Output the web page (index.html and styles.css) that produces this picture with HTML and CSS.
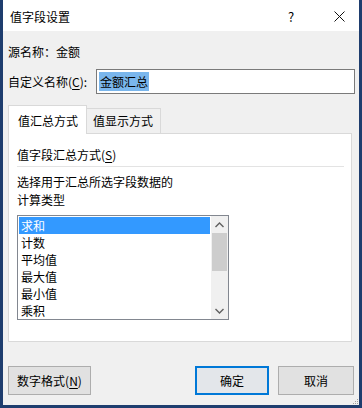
FILE: index.html
```html
<!DOCTYPE html>
<html lang="zh-CN">
<head>
  <meta charset="UTF-8">
  <title>值字段设置</title>
  <link rel="stylesheet" href="styles.css">
</head>
<body>
  <div class="dialog">
    <div class="titlebar">
      <span class="title">值字段设置</span>
      <span class="help">?</span>
      <span class="close">
        <svg width="11" height="11" viewBox="0 0 11 11">
          <path d="M0.5 0.5 L10.5 10.5 M10.5 0.5 L0.5 10.5" stroke="#111" stroke-width="1" fill="none"/>
        </svg>
      </span>
    </div>

    <div class="body">
      <div class="source-row">
        <span>源名称：</span><span>金额</span>
      </div>

      <div class="name-row">
        <span class="name-label">自定义名称(<u>C</u>):</span>
        <div class="text-input"><span class="selected-text">金额汇总</span></div>
      </div>

      <div class="tabs">
        <div class="tab active">值汇总方式</div>
        <div class="tab">值显示方式</div>
      </div>

      <div class="panel">
        <div class="group-title">值字段汇总方式(<u>S</u>)</div>
        <div class="separator"></div>
        <div class="hint">选择用于汇总所选字段数据的</div>
        <div class="hint">计算类型</div>

        <div class="listbox">
          <div class="list-items">
            <div class="item selected">求和</div>
            <div class="item">计数</div>
            <div class="item">平均值</div>
            <div class="item">最大值</div>
            <div class="item">最小值</div>
            <div class="item">乘积</div>
          </div>
          <div class="scrollbar">
            <div class="arrow">
              <svg width="9" height="6" viewBox="0 0 9 6"><path d="M0.5 5 L4.5 1 L8.5 5" stroke="#606060" stroke-width="1.4" fill="none"/></svg>
            </div>
            <div class="thumb"></div>
            <div class="track"></div>
            <div class="arrow">
              <svg width="9" height="6" viewBox="0 0 9 6"><path d="M0.5 1 L4.5 5 L8.5 1" stroke="#606060" stroke-width="1.4" fill="none"/></svg>
            </div>
          </div>
        </div>
      </div>

      <div class="buttons">
        <button class="btn">数字格式(<u>N</u>)</button>
        <span class="spacer"></span>
        <button class="btn default">确定</button>
        <button class="btn">取消</button>
      </div>

      <svg class="grip" width="7" height="7" viewBox="0 0 7 7">
        <rect x="5" y="1" width="1" height="1" fill="#a0a0a0"/>
        <rect x="3" y="3" width="1" height="1" fill="#a0a0a0"/>
        <rect x="5" y="3" width="1" height="1" fill="#a0a0a0"/>
        <rect x="1" y="5" width="1" height="1" fill="#a0a0a0"/>
        <rect x="3" y="5" width="1" height="1" fill="#a0a0a0"/>
        <rect x="5" y="5" width="1" height="1" fill="#a0a0a0"/>
      </svg>
    </div>
  </div>
</body>
</html>
```

FILE: styles.css
```css
/* Dialog frame */
* {
  box-sizing: border-box;
}

body {
  margin: 0;
  font-family: "Noto Sans CJK SC", "Noto Sans", sans-serif;
  font-size: 12px;
  color: #000;
  background: #f0f0f0;
}

u {
  text-decoration: underline;
  text-underline-offset: 2px;
}

.dialog {
  width: 362px;
  height: 408px;
  border: 3px solid #1e3d6e;
  border-top: none;
  background: #f0f0f0;
  display: flex;
  flex-direction: column;
}

.titlebar {
  height: 31px;
  background: #ffffff;
  display: flex;
  align-items: center;
  padding-left: 7px;
  padding-top: 1px;
}

.title {
  flex: 1;
  font-size: 12px;
}

.help {
  font-size: 13px;
  width: 14px;
  margin-right: 36px;
  text-align: center;
}

.close {
  display: flex;
  margin-right: 14px;
}

/* Main area */
.body {
  flex: 1;
  position: relative;
  padding: 13px 4px 0 5px;
  display: flex;
  flex-direction: column;
}

.source-row {
  height: 16px;
  line-height: 16px;
}

.name-row {
  display: flex;
  align-items: center;
  margin-top: 9px;
  height: 25px;
}

.name-label {
  width: 88px;
}

.text-input {
  flex: 1;
  height: 25px;
  background: #ffffff;
  border: 1px solid #7a7a7a;
  padding: 2px 2px;
}

.selected-text {
  display: inline-block;
  background: #7ab6ec;
  height: 19px;
  line-height: 19px;
  padding: 0 1px;
}

/* Tabs */
.tabs {
  display: flex;
  align-items: flex-end;
  margin-top: 11px;
  height: 28px;
  position: relative;
  z-index: 1;
}

.tab {
  height: 25px;
  line-height: 24px;
  padding: 0 6px;
  border: 1px solid #d9d9d9;
  border-bottom: none;
  background: #f0f0f0;
  white-space: nowrap;
}

.tab.active {
  height: 29px;
  line-height: 30px;
  width: 79px;
  background: #ffffff;
  margin-bottom: -1px;
  padding-left: 9px;
}

.tab + .tab {
  border-left: none;
  width: 74px;
}

.panel {
  width: 344px;
  height: 209px;
  background: #ffffff;
  border: 1px solid #d9d9d9;
  padding: 12px 8px 0 8px;
}

.group-title {
  line-height: 18px;
}

.separator {
  width: 327px;
  height: 1px;
  background: #e3e3e3;
  margin: 2px 0 6px;
}

.hint {
  line-height: 18px;
}

/* List box */
.listbox {
  margin-top: 6px;
  width: 212px;
  height: 105px;
  border: 1px solid #828790;
  display: flex;
}

.list-items {
  flex: 1;
  padding: 1px 1px 0 1px;
}

.item {
  height: 17px;
  line-height: 17px;
  padding-left: 2px;
}

.item.selected {
  background: #3399ff;
  color: #ffffff;
}

.scrollbar {
  width: 17px;
  display: flex;
  flex-direction: column;
  background: #f0f0f0;
}

.arrow {
  height: 17px;
  display: flex;
  align-items: center;
  justify-content: center;
}

.thumb {
  height: 38px;
  background: #cdcdcd;
  margin: 0 1px;
}

.track {
  flex: 1;
}

/* Buttons */
.buttons {
  display: flex;
  margin-top: 24px;
  padding-right: 1px;
}

.btn {
  font-family: inherit;
  font-size: 12px;
  height: 29px;
  background: #e1e1e1;
  border: 1px solid #adadad;
  padding: 0;
  color: #000;
}

.btn:first-child {
  width: 83px;
}

.spacer {
  flex: 1;
}

.btn.default {
  width: 74px;
  border: 2px solid #0078d7;
  background: #e3e6ea;
  margin-right: 9px;
}

.btn + .btn:last-child {
  width: 76px;
}

.grip {
  position: absolute;
  right: 0;
  bottom: 0;
}
```
